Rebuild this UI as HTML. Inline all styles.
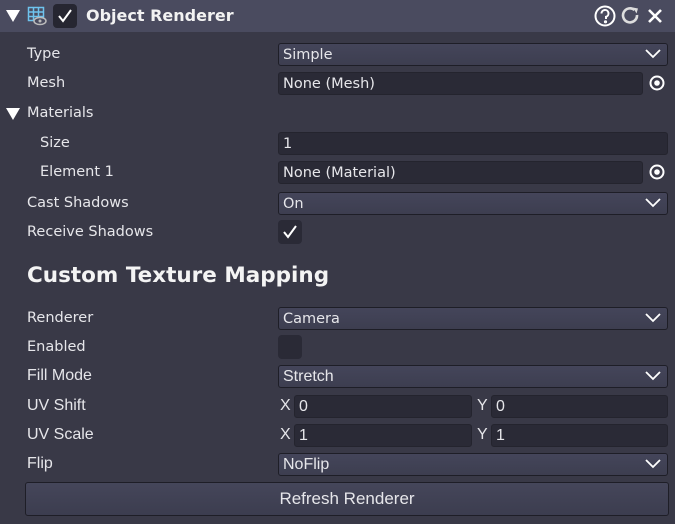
<!DOCTYPE html>
<html><head><style>
*{margin:0;padding:0;box-sizing:border-box}
body{width:675px;height:524px;background:#393947;font-family:"DejaVu Sans","Liberation Sans",sans-serif;color:#e6e6ea;font-size:14.5px;position:relative;overflow:hidden}
.a{position:absolute}
.hdr{left:0;top:0;width:675px;height:32px;background:#4a4b5f}
.lbl{left:27px;line-height:22px}
.dd{left:278px;width:390px;height:23px;background:linear-gradient(#44455a,#3d3e50);border:1px solid #1e1e27;border-radius:3px;padding-left:4px;line-height:22px}
.in{background:#2a2a36;border:1px solid #24242e;border-radius:3px;height:23px;padding-left:4px;line-height:22px}
.chev{right:6px;top:5px}
.cb{width:24px;height:24px;background:#2a2a36;border-radius:4px}
.cond{font-family:"Liberation Sans",sans-serif;font-size:16px}
</style></head><body>
<div class="a hdr"></div>
<svg class="a" style="left:5px;top:9px" width="16" height="14"><path d="M1 1H15L8 13Z" fill="#fff"/></svg>
<svg class="a" style="left:27px;top:6px" width="20" height="20" fill="none" stroke="#6ec3ee" stroke-width="1.5"><rect x="1.5" y="1.5" width="15" height="13"/><path d="M6.5 1.5V14.5M11.5 1.5V14.5M1.5 6H16.5M1.5 10.5H16.5"/><ellipse cx="13" cy="15" rx="6" ry="3.5" fill="#4a4b5f" stroke="#bbb"/><circle cx="13" cy="15" r="1.5" fill="#bbb" stroke="none"/></svg>
<div class="a cb" style="left:53px;top:4px;background:#262631"></div>
<svg class="a" style="left:57px;top:8px" width="16" height="16" fill="none" stroke="#fff" stroke-width="2"><path d="M2 8L6 13L14 2"/></svg>
<div class="a" style="left:86px;top:6px;font-weight:bold;font-size:16px;line-height:20px;color:#f2f2f2">Object Renderer</div>
<svg class="a" style="left:594px;top:5px" width="24" height="22" fill="none" stroke="#fff" stroke-width="2"><circle cx="11" cy="11" r="9.5"/><path d="M7.5 8.5a3.5 3.5 0 1 1 4.5 3.3V14"/><circle cx="11.5" cy="16.8" r="0.6" fill="#fff"/></svg>
<svg class="a" style="left:621px;top:6px" width="20" height="20" fill="none" stroke="#ddd" stroke-width="2.6"><path d="M16 9A7 7 0 1 1 13.5 4"/><path d="M12 1.5L17 2.5L15.5 7.5Z" fill="#ddd" stroke="none"/></svg>
<svg class="a" style="left:647px;top:8px" width="16" height="16" stroke="#fff" stroke-width="2.6"><path d="M2 2L14 14M14 2L2 14"/></svg>

<div class="a lbl" style="top:43px">Type</div>
<div class="a dd" style="top:43px">Simple<svg class="a chev" width="16" height="10" fill="none" stroke="#fff" stroke-width="1.8"><path d="M1 1L8 8L15 1"/></svg></div>
<div class="a lbl" style="top:72px">Mesh</div>
<div class="a in" style="left:278px;top:72px;width:365px">None (Mesh)</div>
<svg class="a" style="left:649px;top:75px" width="16" height="16"><circle cx="8" cy="8" r="6.5" fill="none" stroke="#fff" stroke-width="2"/><circle cx="8" cy="8" r="2.8" fill="#fff"/></svg>
<svg class="a" style="left:5px;top:107px" width="16" height="14"><path d="M1 1H15L8 13Z" fill="#fff"/></svg>
<div class="a lbl" style="top:102px">Materials</div>
<div class="a lbl" style="top:132px;left:40px">Size</div>
<div class="a in" style="left:278px;top:132px;width:390px">1</div>
<div class="a lbl" style="top:161px;left:40px">Element 1</div>
<div class="a in" style="left:278px;top:161px;width:365px">None (Material)</div>
<svg class="a" style="left:649px;top:164px" width="16" height="16"><circle cx="8" cy="8" r="6.5" fill="none" stroke="#fff" stroke-width="2"/><circle cx="8" cy="8" r="2.8" fill="#fff"/></svg>
<div class="a lbl" style="top:192px">Cast Shadows</div>
<div class="a dd" style="top:192px">On<svg class="a chev" width="16" height="10" fill="none" stroke="#fff" stroke-width="1.8"><path d="M1 1L8 8L15 1"/></svg></div>
<div class="a lbl" style="top:221px">Receive Shadows</div>
<div class="a cb" style="left:278px;top:220px"></div>
<svg class="a" style="left:282px;top:224px" width="16" height="16" fill="none" stroke="#fff" stroke-width="2"><path d="M2 8L6 13L14 2"/></svg>
<div class="a" style="left:27px;top:263px;font-weight:bold;font-size:21.5px;line-height:26px;color:#f4f4f4">Custom Texture Mapping</div>
<div class="a lbl" style="top:307px">Renderer</div>
<div class="a dd" style="top:307px">Camera<svg class="a chev" width="16" height="10" fill="none" stroke="#fff" stroke-width="1.8"><path d="M1 1L8 8L15 1"/></svg></div>
<div class="a lbl" style="top:336px">Enabled</div>
<div class="a cb" style="left:278px;top:335px"></div>
<div class="a lbl cond" style="top:365px">Fill Mode</div>
<div class="a dd cond" style="top:365px">Stretch<svg class="a chev" width="16" height="10" fill="none" stroke="#fff" stroke-width="1.8"><path d="M1 1L8 8L15 1"/></svg></div>
<div class="a lbl cond" style="top:395px">UV Shift</div>
<div class="a cond" style="left:280px;top:395px;line-height:22px">X</div>
<div class="a in cond" style="left:294px;top:395px;width:178px">0</div>
<div class="a cond" style="left:477px;top:395px;line-height:22px">Y</div>
<div class="a in cond" style="left:491px;top:395px;width:177px">0</div>
<div class="a lbl cond" style="top:424px">UV Scale</div>
<div class="a cond" style="left:280px;top:424px;line-height:22px">X</div>
<div class="a in cond" style="left:294px;top:424px;width:178px">1</div>
<div class="a cond" style="left:477px;top:424px;line-height:22px">Y</div>
<div class="a in cond" style="left:491px;top:424px;width:177px">1</div>
<div class="a lbl cond" style="top:453px">Flip</div>
<div class="a dd cond" style="top:453px">NoFlip<svg class="a chev" width="16" height="10" fill="none" stroke="#fff" stroke-width="1.8"><path d="M1 1L8 8L15 1"/></svg></div>
<div class="a cond" style="left:25px;top:482px;width:644px;height:34px;background:linear-gradient(#45465a,#3c3d4f);border:1px solid #1e1e27;border-radius:3px;text-align:center;line-height:32px;font-size:17px">Refresh Renderer</div>
</body></html>
